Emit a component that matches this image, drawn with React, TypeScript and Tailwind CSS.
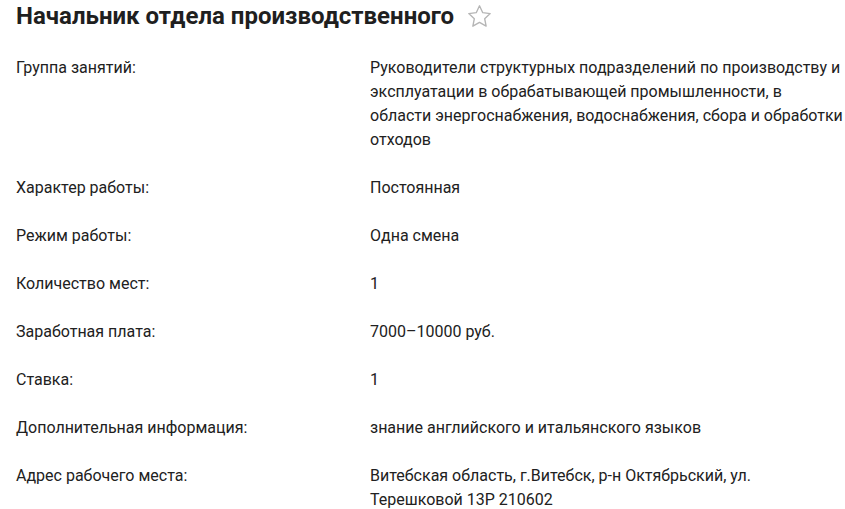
const rows: { label: string; value: string[] }[] = [
  {
    label: 'Группа занятий:',
    value: [
      'Руководители структурных подразделений по производству и эксплуатации в обрабатывающей промышленности, в',
      'области энергоснабжения, водоснабжения, сбора и обработки отходов',
    ],
  },
  { label: 'Характер работы:', value: ['Постоянная'] },
  { label: 'Режим работы:', value: ['Одна смена'] },
  { label: 'Количество мест:', value: ['1'] },
  { label: 'Заработная плата:', value: ['7000–10000 руб.'] },
  { label: 'Ставка:', value: ['1'] },
  { label: 'Дополнительная информация:', value: ['знание английского и итальянского языков'] },
  { label: 'Адрес рабочего места:', value: ['Витебская область, г.Витебск, р-н Октябрьский, ул. Терешковой 13Р 210602'] },
];

function StarIcon() {
  return (
    <svg width="27" height="27" viewBox="0 0 24 24" fill="none" stroke="#b5b5b5" strokeWidth="1.2" strokeLinejoin="round">
      <path d="M12 2.5l2.9 6.1 6.6.8-4.9 4.6 1.3 6.6L12 17.3l-5.9 3.3 1.3-6.6-4.9-4.6 6.6-.8z" />
    </svg>
  );
}

export default function App() {
  return (
    <div className="bg-white w-[845px] h-[509px] overflow-hidden pl-4 text-[#212121] font-['Roboto',sans-serif]">
      <div className="flex items-center gap-3 h-[32px]">
        <h1 className="text-[24px] font-bold leading-[30px] text-[#1f1f1f]">Начальник отдела производственного</h1>
        <StarIcon />
      </div>
      <div className="mt-6 flex flex-col gap-6">
        {rows.map(row => (
          <div key={row.label} className="flex text-base leading-6">
            <div className="w-[354px] shrink-0">{row.label}</div>
            <div className="w-[475px]">
              {row.value.map((v, i) => (
                <div key={i}>{v}</div>
              ))}
            </div>
          </div>
        ))}
      </div>
    </div>
  );
}
